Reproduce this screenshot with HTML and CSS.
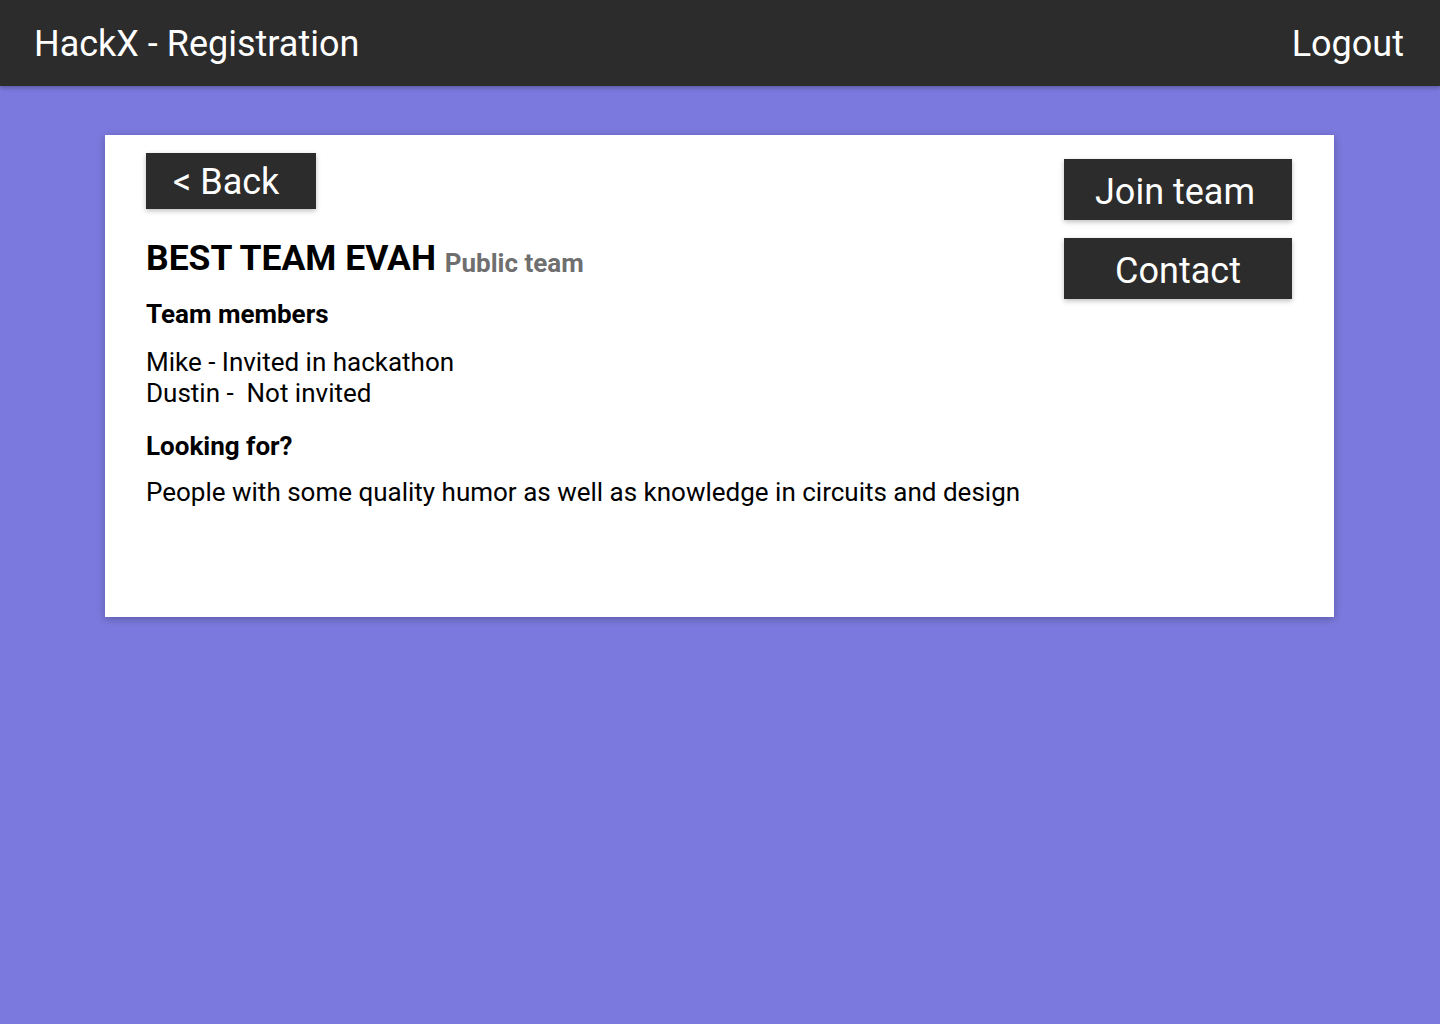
FILE: index.html
```html
<!DOCTYPE html>
<html>
<head>
<meta charset="utf-8">
<link rel="stylesheet" href="styles.css">
</head>
<body>
<header class="topbar">
  <div class="brand">HackX - Registration</div>
  <div class="logout">Logout</div>
</header>
<main class="page">
  <section class="card">
    <div class="info">
      <button class="btn back">&lt; Back</button>
      <h1 class="title">BEST TEAM EVAH <span class="tag">Public team</span></h1>
      <h2 class="label first">Team members</h2>
      <p class="text members">Mike - Invited in hackathon<br>Dustin -&nbsp; Not invited</p>
      <h2 class="label second">Looking for?</h2>
      <p class="text wanted">People with some quality humor as well as knowledge in circuits and design</p>
    </div>
    <div class="actions">
      <button class="btn big join">Join team</button>
      <button class="btn big">Contact</button>
    </div>
  </section>
</main>
</body>
</html>
```
FILE: styles.css
```css
* { box-sizing: border-box; }
html, body { margin: 0; padding: 0; }
body {
  background: #7b79dd;
  font-family: Roboto, "Liberation Sans", sans-serif;
  min-height: 1024px;
}
.topbar {
  height: 86px;
  background: #2c2c2c;
  color: #fff;
  display: flex;
  align-items: center;
  justify-content: space-between;
  padding: 2px 36px 0 34px;
  font-size: 36px;
  box-shadow: 0 2px 4px rgba(0,0,0,0.25);
}
.brand, .logout { line-height: 1; }
.page { padding: 49px 106px 0 105px; }
.card {
  background: #fff;
  height: 482px;
  display: flex;
  justify-content: space-between;
  padding: 18px 42px 0 41px;
  box-shadow: 0 2px 8px rgba(0,0,0,0.25);
}
.btn {
  background: #2c2c2c;
  color: #fff;
  border: none;
  font-family: Roboto, "Liberation Sans", sans-serif;
  box-shadow: 0 2px 5px rgba(0,0,0,0.25);
  padding: 0;
  cursor: pointer;
}
.back {
  width: 170px;
  height: 56px;
  font-size: 36px;
  text-align: left;
  padding: 2px 0 0 27px;
}
.title {
  margin: 28px 0 0;
  font-size: 35.5px;
  font-weight: 700;
  line-height: 42px;
  color: #000;
}
.tag {
  font-size: 26px;
  color: #6f6f6f;
  font-weight: 700;
  vertical-align: -2px;
}
.label {
  margin: 0;
  font-size: 26px;
  font-weight: 700;
  line-height: 31px;
}
.text {
  margin: 0;
  font-size: 26px;
  line-height: 31px;
}
.label.first { margin-top: 15px; }
.members { margin-top: 17px; }
.label.second { margin-top: 22px; }
.wanted { margin-top: 15px; }
.actions {
  display: flex;
  flex-direction: column;
  gap: 18px;
  padding-top: 6px;
}
.big {
  width: 228px;
  height: 61px;
  font-size: 36px;
  padding-top: 4px;
}
.join { padding-right: 6px; }
```
